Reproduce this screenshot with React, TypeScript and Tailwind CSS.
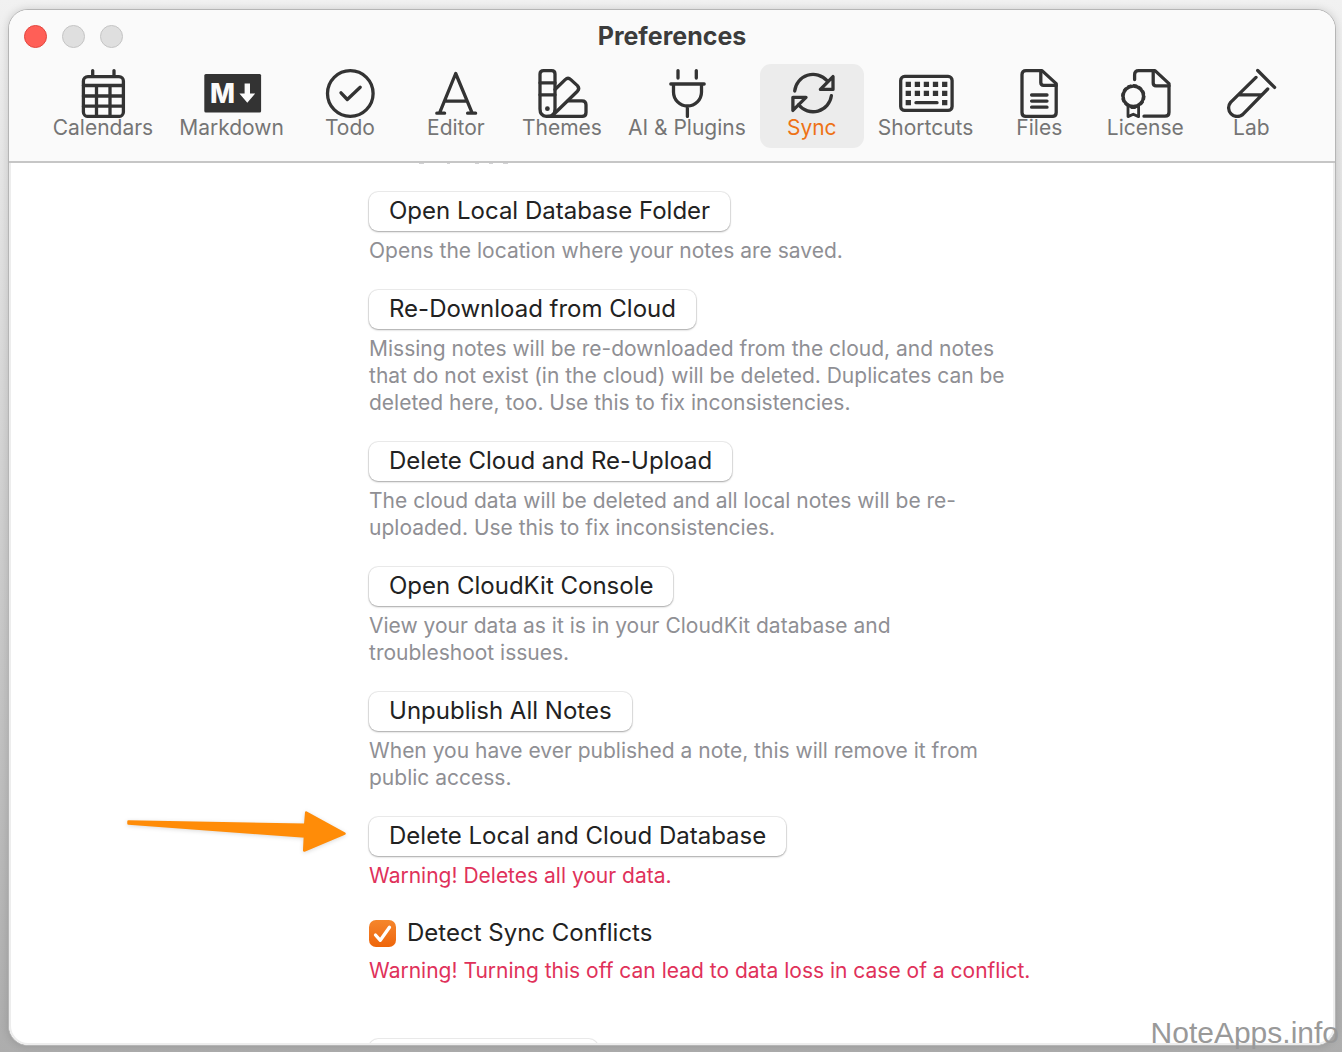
import { useState } from 'react'
import type { ReactNode } from 'react'
import clsx from 'clsx'

const tabs: { label: string; icon: ReactNode }[] = [
  {
    label: 'Calendars',
    icon: (
      <>
        <rect x="10.4" y="8.6" width="40" height="39.8" rx="4.5" />
        <path d="M10.4 17.5H50.4M10.4 28H50.4M10.4 38.2H50.4M23.5 17.5V48.4M37 17.5V48.4M19.7 2.6V8M41 2.6V8" />
      </>
    ),
  },
  {
    label: 'Markdown',
    icon: (
      <>
        <rect x="2.3" y="6" width="56.8" height="38.6" rx="1.5" fill="#333" stroke="none" />
        <text x="20.4" y="34.6" textAnchor="middle" fill="#fafafa" stroke="none" fontSize="26.5" fontWeight="800">
          M
        </text>
        <path d="M42.6 15.4H48V25.6H53.2L45.3 34.8L37.4 25.6H42.6Z" fill="#fafafa" stroke="none" />
      </>
    ),
  },
  {
    label: 'Todo',
    icon: (
      <>
        <circle cx="30.3" cy="25.5" r="22.8" />
        <path d="M21 24.8L27.3 31.5L40.2 19.2" />
      </>
    ),
  },
  {
    label: 'Editor',
    icon: (
      <path d="M13.7 44.6L29.7 5.5L46 44.6M19.2 33.2H41.2M10.8 45.2H18.6M41.6 45.2H49.6" />
    ),
  },
  {
    label: 'Themes',
    icon: (
      <>
        <path d="M11.6 2.6H19.6Q23 2.6 23 6V41Q23 48.4 15.5 48.4Q8 48.4 8 41V6Q8 2.6 11.6 2.6Z" />
        <path d="M8 14.8H23M8 26.8H23M23 21.5L33.2 11.6Q36 9 38.8 11.6L45.4 17.6Q48 20.4 45.4 23.2L21 47" />
        <path d="M36.5 32.8H50Q54 32.8 54 36.8V44.4Q54 48.4 50 48.4H15.5" />
        <circle cx="15.4" cy="40.7" r="2.4" fill="#333" stroke="none" />
      </>
    ),
  },
  {
    label: 'AI & Plugins',
    icon: (
      <path d="M21 2.6V10M39.3 2.6V10M13.8 16H47.2M16.5 16V24A14 14 0 0 0 44.5 24V16M30.4 38V48.4" />
    ),
  },
  {
    label: 'Sync',
    icon: (
      <>
        <path d="M12.7 23A18.5 18.5 0 0 1 45 12.7M49.4 27.6A18.5 18.5 0 0 1 16.6 36.8" />
        <path d="M51 8.6V21.4H38.4ZM10.9 29.3H24L10.9 42.4Z" />
      </>
    ),
  },
  {
    label: 'Shortcuts',
    icon: (
      <>
        <rect x="4.7" y="8.4" width="51.4" height="34" rx="4" />
        <path
          d="M12.3 13.7V19M21.4 13.7V19M30.4 13.7V19M39.5 13.7V19M48.7 13.7V19M12.3 22.8V28.1M21.4 22.8V28.1M30.4 22.8V28.1M39.5 22.8V28.1M48.7 22.8V28.1M12.3 32V37.3M48.7 32V37.3"
          strokeWidth="5.3"
          strokeLinecap="butt"
        />
        <path d="M20 34.7H41" />
      </>
    ),
  },
  {
    label: 'Files',
    icon: (
      <>
        <path d="M17 2.6H33L47.2 15.6V44.4Q47.2 48.4 43.2 48.4H17Q13 48.4 13 44.4V6.6Q13 2.6 17 2.6Z" />
        <path d="M31.8 2.6V14.6Q31.8 17.4 34.6 17.4H47.2M22.6 27H38M22.6 33.1H38M22.6 39.2H38" />
      </>
    ),
  },
  {
    label: 'License',
    icon: (
      <>
        <path d="M19.6 11.5V6.6Q19.6 2.6 23.6 2.6H40L54 15.6V44.2Q54 48.2 50 48.2H29" />
        <path d="M38.2 2.6V15Q38.2 17.8 41 17.8H54" />
        <circle cx="18.3" cy="28.3" r="10.2" />
        <circle cx="18.3" cy="28.3" r="11.5" strokeWidth="1.4" strokeDasharray="3 3.02" />
        <path d="M13 38.6V48.6L18.3 46.2L23.6 48.6V38.6M16.6 39.5H20" strokeWidth="2.8" />
      </>
    ),
  },
  {
    label: 'Lab',
    icon: (
      <path d="M36.7 2.5L53.6 19.4M35 9.4L9.6 34.4A8.6 8.6 0 0 0 21.6 46.6L46.7 21M17.8 26.9H40" />
    ),
  },
]

const actions = [
  { label: 'Open Local Database Folder', note: 'Opens the location where your notes are saved.' },
  {
    label: 'Re-Download from Cloud',
    note: 'Missing notes will be re-downloaded from the cloud, and notes\nthat do not exist (in the cloud) will be deleted. Duplicates can be\ndeleted here, too. Use this to fix inconsistencies.',
  },
  {
    label: 'Delete Cloud and Re-Upload',
    note: 'The cloud data will be deleted and all local notes will be re-\nuploaded. Use this to fix inconsistencies.',
  },
  {
    label: 'Open CloudKit Console',
    note: 'View your data as it is in your CloudKit database and\ntroubleshoot issues.',
  },
  {
    label: 'Unpublish All Notes',
    note: 'When you have ever published a note, this will remove it from\npublic access.',
  },
  { label: 'Delete Local and Cloud Database', note: 'Warning! Deletes all your data.', danger: true },
]

const buttonStyle =
  'h-[39px] rounded-[9px] bg-white px-5 pb-0.5 text-[24px] leading-[36px] text-[#222] shadow-[0_0_0_1px_rgba(0,0,0,0.07),0_1px_2px_rgba(0,0,0,0.3)]'

function Note({ danger, children }: { danger?: boolean; children: ReactNode }) {
  return (
    <p className={clsx('whitespace-pre text-[21px] leading-[27px]', danger ? 'text-[#e0315a]' : 'text-[#8f8f94]')}>
      {children}
    </p>
  )
}

function Arrow() {
  return (
    <svg
      className="absolute right-full top-1/2 mr-[19px] -translate-y-1/2 drop-shadow-sm"
      width="226"
      height="60"
      viewBox="0 0 226 60"
      aria-hidden="true"
    >
      <path
        d="M4.5 14.5L181.2 17.8L182.2 5.5L220.5 26.6L180.2 43.5L180.9 29.6L4.5 16.5Z"
        fill="#ff8c08"
        stroke="#ff8c08"
        strokeWidth="2.5"
        strokeLinejoin="round"
      />
    </svg>
  )
}

export default function App() {
  const [active, setActive] = useState('Sync')
  const [detect, setDetect] = useState(true)

  return (
    <div className="relative h-screen overflow-hidden bg-linear-to-b from-[#f1f1f1] via-[#cfcfcf] to-[#adadad] pt-[9px] pr-[6px] pb-[6px] pl-[8px] font-['Inter',sans-serif]">
      <main className="flex h-full flex-col overflow-hidden rounded-[20px] border border-[#b5b5b5] bg-white shadow-[0_0_8px_rgba(0,0,0,0.15)]">
        <header className="border-b-2 border-[#c6c6c6] bg-[#fafafa] pb-[13px]">
          <div className="flex h-[53px] items-center px-[15px]">
            <div className="flex flex-1 gap-[15px]">
              <button aria-label="Close" className="size-[23px] rounded-full border border-[#e2463f] bg-[#ff5f57]" />
              <button aria-label="Minimize" className="size-[23px] rounded-full border border-[#c4c4c4] bg-[#dfdfdf]" />
              <button aria-label="Zoom" className="size-[23px] rounded-full border border-[#c4c4c4] bg-[#dfdfdf]" />
            </div>
            <h1 className="pb-0.5 text-[25px] leading-[30px] font-bold text-[#3c3c3c]">Preferences</h1>
            <div className="flex-1" />
          </div>

          {/* Toolbar */}
          <nav className="flex justify-center gap-0.5 pt-px">
            {tabs.map((tab) => (
              <button
                key={tab.label}
                onClick={() => setActive(tab.label)}
                className={clsx(
                  'flex min-w-[104px] flex-col items-center rounded-[11px] px-3 pt-1 pb-2.5',
                  active === tab.label ? 'bg-[#ececec] text-[#ee7216]' : 'text-[#757575]',
                )}
              >
                <svg
                  width="60"
                  height="50"
                  viewBox="0 0 60 50"
                  fill="none"
                  stroke="#333"
                  strokeWidth="3.3"
                  strokeLinecap="round"
                  strokeLinejoin="round"
                  aria-hidden="true"
                >
                  {tab.icon}
                </svg>
                <span className="text-[21px] leading-5 whitespace-nowrap">{tab.label}</span>
              </button>
            ))}
          </nav>
        </header>

        <section className="flex min-h-0 flex-1 flex-col overflow-hidden rounded-b-[19px] border-x-2 border-b-2 border-[#ededed] pl-[27%]">
          {/* last pixels of the row that is scrolled away */}
          <svg className="mb-[26px] shrink-0" width="150" height="3" aria-hidden="true">
            <path d="M50 0.5H55M78 0.5H81M106 0.5H110M120 0.5H124M134 0.5H139" stroke="#d2d2d4" />
          </svg>

          {actions.map((action) => (
            <div key={action.label} className="mb-[26px] shrink-0">
              <div className="relative mb-1.5 flex w-fit">
                {action.danger && <Arrow />}
                <button className={buttonStyle}>{action.label}</button>
              </div>
              <Note danger={action.danger}>{action.note}</Note>
            </div>
          ))}

          <div className="mb-[55px] shrink-0">
            <label className="mb-1.5 flex w-fit items-center gap-[11px] text-[24px] leading-[36px] text-[#222]">
              <span className="relative flex size-[27px]">
                <input
                  type="checkbox"
                  checked={detect}
                  onChange={(e) => setDetect(e.target.checked)}
                  className="size-full appearance-none rounded-[7px] border border-[#c4c4c4] checked:border-0 checked:bg-linear-to-b checked:from-[#f5862b] checked:to-[#ee6508]"
                />
                {detect && (
                  <svg className="pointer-events-none absolute inset-0" viewBox="0 0 27 27" fill="none" aria-hidden="true">
                    <path
                      d="M6.5 15L11.3 20.3L20.5 7.3"
                      stroke="#fff"
                      strokeWidth="3.3"
                      strokeLinecap="round"
                      strokeLinejoin="round"
                    />
                  </svg>
                )}
              </span>
              Detect Sync Conflicts
            </label>
            <Note danger>Warning! Turning this off can lead to data loss in case of a conflict.</Note>
          </div>

          <button aria-label="Reset" className={clsx(buttonStyle, 'w-[229px] shrink-0')} />
        </section>
      </main>

      <p className="absolute right-[3px] bottom-0 font-['Liberation_Sans',sans-serif] text-[30px] leading-[38px] text-[#999]">
        NoteApps.info
      </p>
    </div>
  )
}
